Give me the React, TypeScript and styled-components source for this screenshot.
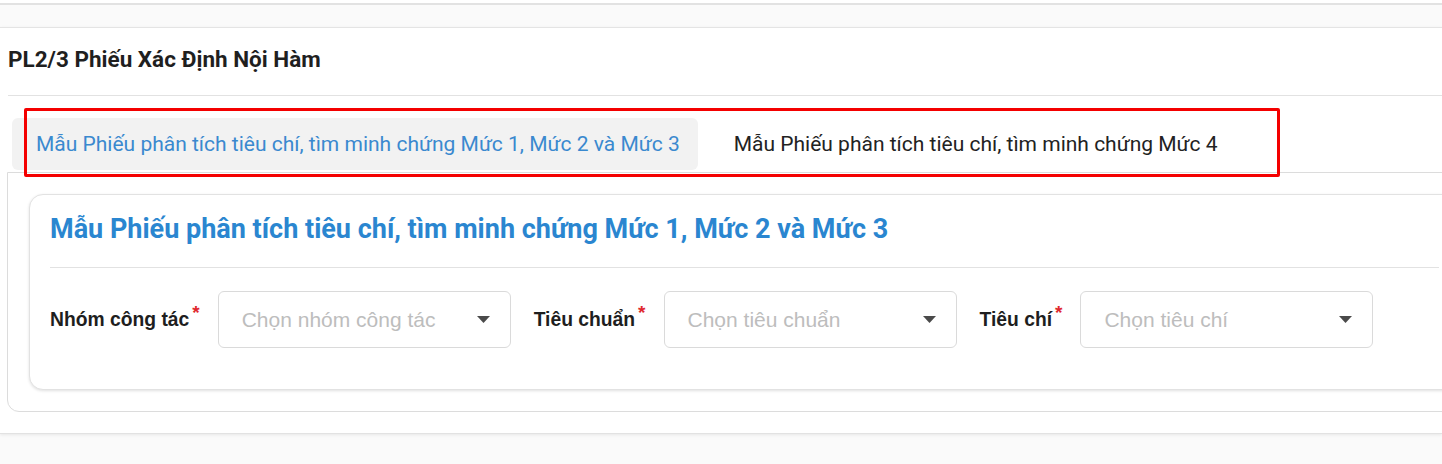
import styled, { createGlobalStyle } from "styled-components";

const GlobalStyle = createGlobalStyle`
  body {
    margin: 0;
    background: #fafafa;
    font-family: Roboto, "Liberation Sans", Arial, sans-serif;
    overflow: hidden;
  }
`;

const groups = [
  { label: "Nhóm công tác", placeholder: "Chọn nhóm công tác" },
  { label: "Tiêu chuẩn", placeholder: "Chọn tiêu chuẩn" },
  { label: "Tiêu chí", placeholder: "Chọn tiêu chí" },
];

const tabs = [
  "Mẫu Phiếu phân tích tiêu chí, tìm minh chứng Mức 1, Mức 2 và Mức 3",
  "Mẫu Phiếu phân tích tiêu chí, tìm minh chứng Mức 4",
];

const Caret = () => (
  <svg width="13" height="7" viewBox="0 0 13 7">
    <path d="M0 0h13L6.5 7z" fill="#4a4a4a" />
  </svg>
);

const App = () => {
  return (
    <Page>
      <GlobalStyle />
      <TopStrip />
      <Card>
        <Header>
          <Title>PL2/3 Phiếu Xác Định Nội Hàm</Title>
        </Header>
        <TabBar>
          {tabs.map((t, i) => (
            <Tab key={t} active={i === 0}>
              {t}
            </Tab>
          ))}
          <Highlight />
        </TabBar>
        <Panel>
          <InnerCard>
            <InnerTitle>{tabs[0]}</InnerTitle>
            <FormRow>
              {groups.map((g) => (
                <Field key={g.label}>
                  <Label>
                    {g.label}
                    <Star>*</Star>
                  </Label>
                  <Select>
                    <Placeholder>{g.placeholder}</Placeholder>
                    <Caret />
                  </Select>
                </Field>
              ))}
            </FormRow>
          </InnerCard>
        </Panel>
      </Card>
    </Page>
  );
};

export default App;

const Page = styled.div`
  width: 100%;
  min-height: 464px;
`;

const TopStrip = styled.div`
  height: 3px;
  background: #fff;
  border-bottom: 2px solid #e2e2e2;
  margin-bottom: 22px;
`;

const Card = styled.div`
  background: #fff;
  border-top: 1px solid #e4e4e4;
  border-bottom: 1px solid #e2e2e2;
  box-shadow: 0 1px 3px rgba(0, 0, 0, 0.08);
  padding: 0 0 21px 7px;
`;

const Header = styled.div`
  height: 67px;
  margin-left: 1px;
  display: flex;
  align-items: center;
  border-bottom: 1px solid #e2e2e2;
`;

const Title = styled.h2`
  margin: 0;
  font-size: 22.5px;
  font-weight: 700;
  color: #1f1f1f;
  padding-bottom: 6px;
`;

const TabBar = styled.div`
  position: relative;
  display: flex;
  gap: 12px;
  padding: 22px 0 2px 5px;
`;

const Tab = styled.div<{ active?: boolean }>`
  height: 52px;
  display: flex;
  align-items: center;
  padding: 0 18px 0 24px;
  border-radius: 6px;
  font-size: 21px;
  color: ${(p) => (p.active ? "#3a89cf" : "#222")};
  background: ${(p) => (p.active ? "#f2f2f2" : "transparent")};
  white-space: nowrap;
`;

const Highlight = styled.div`
  position: absolute;
  left: 17px;
  top: 12px;
  width: 1250px;
  height: 63px;
  border: 3px solid #f40000;
  border-radius: 2px;
  pointer-events: none;
`;

const Panel = styled.div`
  margin-right: -20px;
  border: 1px solid #dcdcdc;
  border-radius: 0 0 12px 12px;
  padding: 21px;
`;

const InnerCard = styled.div`
  background: #fff;
  border: 1px solid #e2e2e2;
  border-radius: 14px;
  box-shadow: 0 1px 3px rgba(0, 0, 0, 0.12);
  padding: 0 20px 41px 20px;
  margin-right: -20px;
`;

const InnerTitle = styled.h3`
  margin: 0 0 23px;
  height: 73px;
  box-sizing: border-box;
  display: flex;
  align-items: center;
  padding-bottom: 4px;
  border-bottom: 1px solid #e2e2e2;
  font-size: 27px;
  font-weight: 700;
  color: #2a86d0;
`;

const FormRow = styled.div`
  display: flex;
  gap: 23px;
`;

const Field = styled.div`
  display: flex;
  align-items: center;
  gap: 18px;
`;

const Label = styled.label`
  font-family: "Liberation Sans", Arial, sans-serif;
  font-size: 19.3px;
  font-weight: 700;
  color: #1e1e1e;
  white-space: nowrap;
`;

const Star = styled.span`
  color: #e0282e;
  font-size: 19px;
  position: relative;
  top: -7px;
  margin-left: 3px;
`;

const Select = styled.div`
  width: 293px;
  height: 57px;
  box-sizing: border-box;
  border: 1px solid #dadada;
  border-radius: 6px;
  display: flex;
  align-items: center;
  justify-content: space-between;
  padding: 0 20px 0 23px;
  background: #fff;
`;

const Placeholder = styled.span`
  font-family: "Liberation Sans", Arial, sans-serif;
  font-size: 21px;
  color: #bdbdbd;
`;
